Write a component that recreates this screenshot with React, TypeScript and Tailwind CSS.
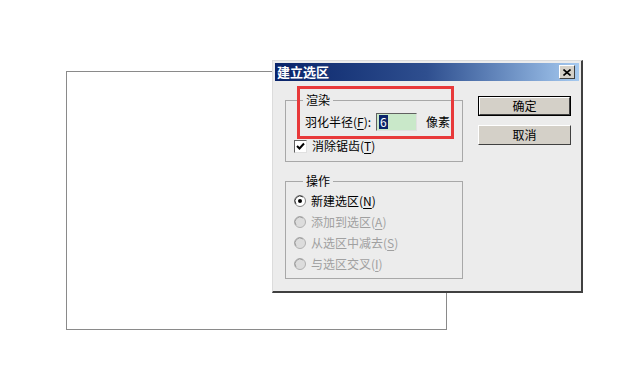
import React from 'react';

const font = "font-['Noto_Sans_CJK_SC','Noto_Sans',sans-serif]";

const Mn = ({ c }: { c: string }) => <span className="underline underline-offset-2">{c}</span>;

const Radio = ({ checked, disabled }: { checked?: boolean; disabled?: boolean }) => (
  <svg width="12" height="12" viewBox="0 0 12 12" className="shrink-0">
    <circle cx="6" cy="6" r="5.5" fill={disabled ? '#dcdcdc' : '#ffffff'} stroke={disabled ? '#b0b0b0' : '#808080'} />
    <path d="M2 9 A5 5 0 0 1 9 2" fill="none" stroke={disabled ? '#a0a0a0' : '#404040'} strokeWidth="1" />
    {checked && <circle cx="6" cy="6" r="2" fill="#000" />}
  </svg>
);

const RadioRow = ({ label, m, checked, disabled }: { label: string; m: string; checked?: boolean; disabled?: boolean }) => (
  <div className={`flex items-center h-[21px] ${disabled ? 'text-[#a0a0a0]' : 'text-black'}`}>
    <Radio checked={checked} disabled={disabled} />
    <span className="ml-[5px]">
      {label}(<Mn c={m} />)
    </span>
  </div>
);

export default function App() {
  return (
    <div className={`relative w-[631px] h-[369px] bg-white overflow-hidden text-[12px] leading-[16px] ${font}`}>
      {/* canvas */}
      <div className="absolute left-[66px] top-[71px] w-[381px] h-[259px] border border-[#8a8a8a] bg-white" />

      {/* dialog */}
      <div className="absolute left-[272px] top-[60px] w-[311px] h-[233px] bg-[#ececec] border-t border-l border-[#dcdcdc] border-r-2 border-b-2 border-r-[#404040] border-b-[#404040] flex flex-col">
        <div className="mx-[2px] mt-[2px] h-[18px] bg-gradient-to-r from-[#0a246a] via-[#2f4f8f] to-[#a6caf0] flex items-center justify-between pl-[2px] pr-[4px]">
          <span className="text-white font-bold text-[13px] leading-[16px]">建立选区</span>
          <div className="w-[16px] h-[14px] bg-[#d4d0c8] border border-t-white border-l-white border-r-[#404040] border-b-[#404040] flex items-center justify-center">
            <svg width="8" height="7" viewBox="0 0 8 7">
              <path d="M0.5 0.5 L7.5 6.5 M7.5 0.5 L0.5 6.5" stroke="#000" strokeWidth="1.6" />
            </svg>
          </div>
        </div>

        <div className="flex pl-[12px] pt-[11px]">
          <div className="w-[178px] flex flex-col">
            <fieldset className="border border-[#a8a8a8] h-[70px] px-[8px]">
              <legend className="ml-[9px] px-[3px]">渲染</legend>
              <div className="flex items-center h-[18px] mt-[5px] pl-[11px]">
                <span>羽化半径(<Mn c="F" />):</span>
                <div className="ml-[5px] w-[41px] h-[18px] bg-[#c9e8c9] border border-t-[#606060] border-l-[#606060] border-r-[#e0e0e0] border-b-[#e0e0e0] flex items-center pl-[2px]">
                  <span className="bg-[#0a246a] text-white px-[1px] leading-[14px]">6</span>
                </div>
                <span className="ml-[9px]">像素</span>
              </div>
              <div className="flex items-center h-[16px] mt-[7px]">
                <div className="w-[13px] h-[13px] bg-white border border-t-[#606060] border-l-[#606060] border-r-[#e0e0e0] border-b-[#e0e0e0] flex items-center justify-center">
                  <svg width="9" height="9" viewBox="0 0 9 9">
                    <path d="M1 4 L3.5 6.5 L8 1.5" fill="none" stroke="#000" strokeWidth="2" />
                  </svg>
                </div>
                <span className="ml-[5px]">消除锯齿(<Mn c="T" />)</span>
              </div>
            </fieldset>

            <fieldset className="border border-[#a8a8a8] h-[106px] mt-[11px] px-[8px]">
              <legend className="ml-[9px] px-[3px]">操作</legend>
              <div className="flex flex-col mt-[1px]">
                <RadioRow label="新建选区" m="N" checked />
                <RadioRow label="添加到选区" m="A" disabled />
                <RadioRow label="从选区中减去" m="S" disabled />
                <RadioRow label="与选区交叉" m="I" disabled />
              </div>
            </fieldset>
          </div>

          <div className="ml-[15px] mt-[4px] flex flex-col gap-[9px]">
            <div className="w-[93px] h-[20px] border border-black">
              <div className="w-full h-full bg-[#d4d0c8] border border-t-white border-l-white border-r-[#404040] border-b-[#404040] flex items-center justify-center">
                确定
              </div>
            </div>
            <div className="w-[93px] h-[20px] bg-[#d4d0c8] border border-t-white border-l-white border-r-[#404040] border-b-[#404040] flex items-center justify-center">
              取消
            </div>
          </div>
        </div>

        {/* red annotation box */}
        <div className="absolute left-[24px] top-[25px] w-[157px] h-[53px] border-[3px] border-[#e8393a]" />
      </div>
    </div>
  );
}
